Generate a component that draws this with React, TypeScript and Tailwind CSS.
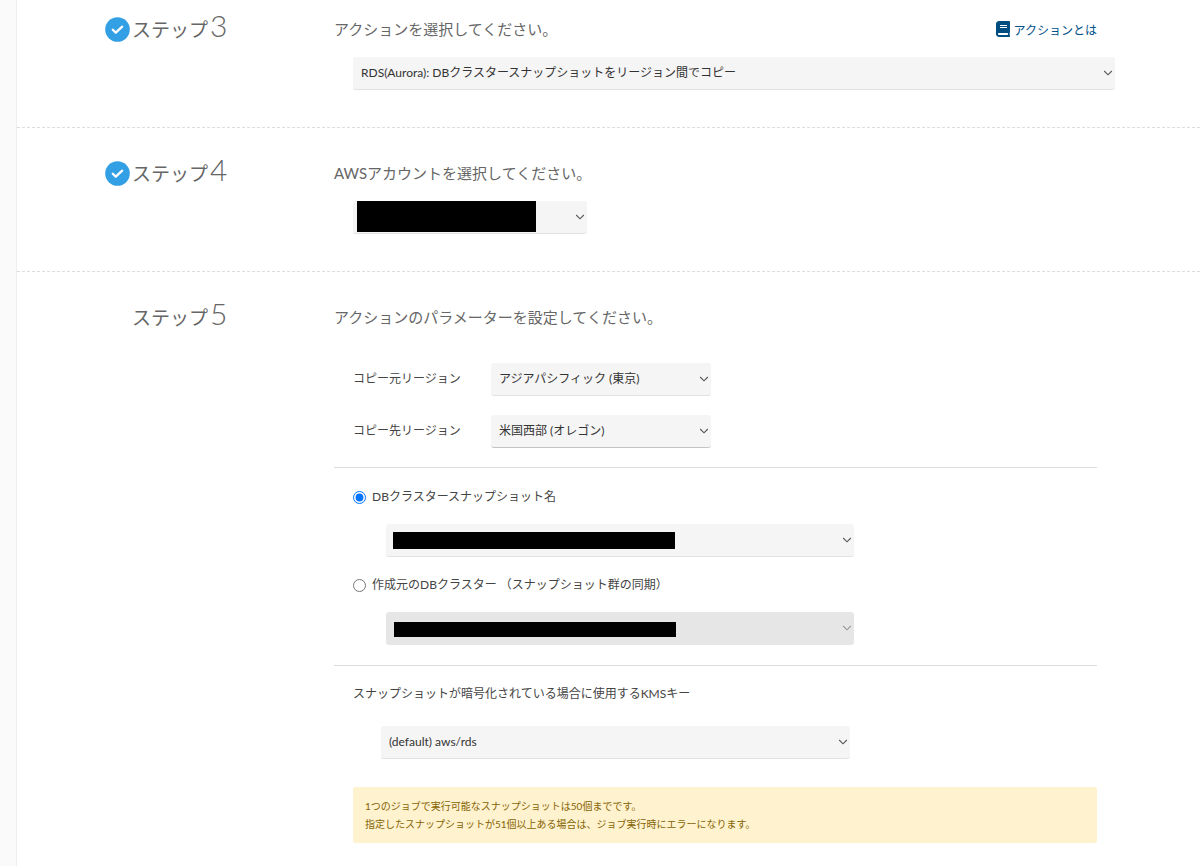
import type { ReactNode } from "react";
import clsx from "clsx";
import { FaBook } from "react-icons/fa";

type StepProps = {
  number: number;
  title: string;
  done?: boolean;
  first?: boolean;
  last?: boolean;
  link?: ReactNode;
  children: ReactNode;
};

type SelectBoxProps = {
  id: string;
  label?: string;
  options: string[];
  className?: string;
  disabled?: boolean;
  focused?: boolean;
  maskClassName?: string;
};

const REGIONS = [
  {
    id: "source-region",
    label: "コピー元リージョン",
    option: "アジアパシフィック (東京)",
    focused: false,
  },
  {
    id: "dest-region",
    label: "コピー先リージョン",
    option: "米国西部 (オレゴン)",
    focused: true,
  },
];

const TARGETS = [
  {
    id: "snapshot",
    label: "DBクラスタースナップショット名",
    checked: true,
    mask: "left-[7px] top-2 h-[17px] w-[282px]",
  },
  {
    id: "cluster",
    label: "作成元のDBクラスター （スナップショット群の同期）",
    checked: false,
    mask: "left-2 top-2.5 h-[15px] w-[282px]",
  },
];

function CheckBadge() {
  return (
    <svg viewBox="0 0 25 25" className="size-[25px]" aria-hidden="true">
      <circle cx="12.5" cy="12.5" r="12.3" fill="#339fe5" />
      <path
        d="M7.8 12.7l3 3 6.4-6"
        fill="none"
        stroke="#fff"
        strokeWidth="2.3"
        strokeLinecap="round"
        strokeLinejoin="round"
      />
    </svg>
  );
}

function SelectBox({
  id,
  label,
  options,
  className,
  disabled,
  focused,
  maskClassName,
}: SelectBoxProps) {
  return (
    <div className={clsx("relative", className)}>
      <select
        id={id}
        aria-label={label}
        disabled={disabled}
        className={clsx(
          "block h-[33px] w-full appearance-none rounded-[3px] border-b pr-6 pl-2 text-xs text-[#333] outline-none",
          disabled ? "border-[#e6e6e6] bg-[#e6e6e6] opacity-100" : "bg-[#f5f5f5]",
          !disabled && (focused ? "border-[#c4c4c4]" : "border-[#e2e2e2]"),
        )}
      >
        {options.map((o) => (
          <option key={o}>{o}</option>
        ))}
      </select>
      <svg
        viewBox="0 0 10 6"
        className={clsx(
          "pointer-events-none absolute top-[13px] right-[2px] h-[6px] w-[10px]",
          disabled ? "text-[#999]" : "text-[#555]",
        )}
        aria-hidden="true"
      >
        <path d="M1.2 1l3.8 3.8L8.8 1" fill="none" stroke="currentColor" strokeWidth="1.1" />
      </svg>
      {maskClassName && (
        <span className={clsx("pointer-events-none absolute bg-black", maskClassName)} />
      )}
    </div>
  );
}

function Step({ number, title, done, first, last, link, children }: StepProps) {
  return (
    <section
      className={clsx(
        "flex pr-[103px] pl-[88px]",
        first ? "pt-[19px]" : "pt-[35px]",
        last ? "pb-6" : "border-b border-dashed border-[#ddd] pb-[37px]",
      )}
    >
      <div className="flex h-5 w-[229px] shrink-0 items-center gap-[2px]">
        <span className="flex w-[25px] shrink-0">{done && <CheckBadge />}</span>
        <h2 className="flex items-baseline gap-[2px] pb-1 text-[19px] leading-8 text-[#666]">
          ステップ
          <span className="text-3xl leading-8 font-light">{number}</span>
        </h2>
      </div>
      <div className="min-w-0 flex-1">
        <div className="flex h-5 items-baseline justify-between">
          <h3 className="text-[15px] leading-5 text-[#666]">{title}</h3>
          {link}
        </div>
        {children}
      </div>
    </section>
  );
}

export default function App() {
  return (
    <div className="flex min-h-screen bg-[#fafafa] pl-4 font-['Lato','Noto_Sans_CJK_JP',sans-serif] text-[#444]">
      <main className="min-w-0 flex-1 border-l border-[#eee] bg-white">
        <Step
          number={3}
          title="アクションを選択してください。"
          done
          first
          link={
            <a href="#action" className="flex items-baseline gap-1 text-xs leading-5 text-[#00508a]">
              <FaBook className="h-4 w-3.5 self-start text-[#004d80]" />
              アクションとは
            </a>
          }
        >
          <SelectBox
            id="action"
            label="アクション"
            options={["RDS(Aurora): DBクラスタースナップショットをリージョン間でコピー"]}
            className="mt-[18px] -mr-[18px] ml-[19px]"
          />
        </Step>

        <Step number={4} title="AWSアカウントを選択してください。" done>
          <SelectBox
            id="account"
            label="AWSアカウント"
            options={[""]}
            className="mt-[18px] ml-[19px] w-[234px]"
            maskClassName="left-1 top-0 h-[31px] w-[179px]"
          />
        </Step>

        <Step number={5} title="アクションのパラメーターを設定してください。" last>
          <div className="mt-9 mb-[19px] ml-[19px] flex flex-col gap-[19px]">
            {REGIONS.map((r) => (
              <div key={r.id} className="flex">
                <label htmlFor={r.id} className="w-[138px] pt-1.5 text-xs leading-5">
                  {r.label}
                </label>
                <SelectBox
                  id={r.id}
                  options={[r.option]}
                  focused={r.focused}
                  className="w-[220px]"
                />
              </div>
            ))}
          </div>

          <hr className="border-[#ddd]" />

          <div className="mt-[19px] mb-5 ml-[19px] flex flex-col gap-[18px]">
            {TARGETS.map((t) => (
              <div key={t.id}>
                <label className="flex h-5 items-center gap-1.5 text-xs leading-5">
                  <input
                    type="radio"
                    name="target"
                    defaultChecked={t.checked}
                    className="size-[13px]"
                  />
                  {t.label}
                </label>
                <SelectBox
                  id={t.id}
                  label={t.label}
                  options={[""]}
                  disabled={!t.checked}
                  className="mt-[17px] ml-[33px] w-[468px]"
                  maskClassName={t.mask}
                />
              </div>
            ))}
          </div>

          <hr className="border-[#ddd]" />

          <div className="mt-[18px] ml-[19px]">
            <label htmlFor="kms" className="block text-xs leading-5">
              スナップショットが暗号化されている場合に使用するKMSキー
            </label>
            <SelectBox
              id="kms"
              options={["(default) aws/rds"]}
              className="mt-[22px] ml-7 w-[469px]"
            />
            <div className="mt-7 rounded-[2px] bg-[#fff2cf] px-3 py-2.5 text-[10px] leading-[18px] text-[#856404]">
              <p>1つのジョブで実行可能なスナップショットは50個までです。</p>
              <p>指定したスナップショットが51個以上ある場合は、ジョブ実行時にエラーになります。</p>
            </div>
          </div>
        </Step>
      </main>
    </div>
  );
}
